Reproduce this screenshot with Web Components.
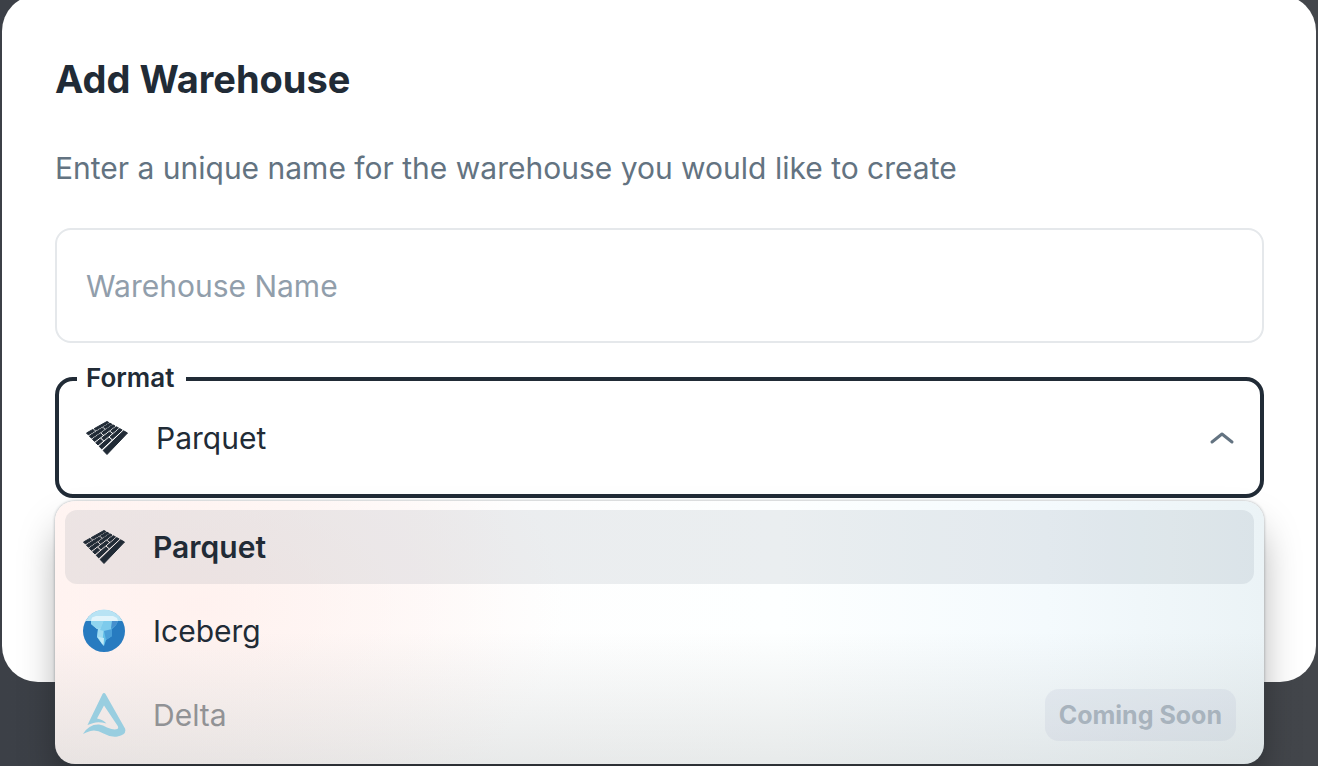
<!DOCTYPE html>
<html lang="en">
<head>
<meta charset="utf-8">
<meta name="viewport" content="width=device-width, initial-scale=1">
<title>Add Warehouse</title>
<style>
  :root {
    --ink: #212b36;
    --muted: #637381;
    --placeholder: #919eab;
    --line: #e5e8eb;
  }
  * { box-sizing: border-box; }
  body {
    margin: 0;
    min-height: 100vh;
    overflow: hidden;
    background: linear-gradient(90deg, #3c4047, #43464b);
    color: var(--ink);
    font-family: Inter, "Open Sans", sans-serif;
    font-size: 30px;
  }
</style>
</head>
<body>
<modal-dialog heading="Add Warehouse">
  <span slot="description">Enter a unique name for the warehouse you would like to create</span>
  <text-field placeholder="Warehouse Name"></text-field>
  <format-select label="Format" value="Parquet">
    <format-option icon="parquet" selected>Parquet</format-option>
    <format-option icon="iceberg">Iceberg</format-option>
    <format-option icon="delta" disabled note="Coming Soon">Delta</format-option>
  </format-select>
</modal-dialog>

<script>
// Each row of floor planks: start and end across the floor, then the joints along it
const plankRows = [
  [0, .09, [.34]],
  [.14, .24, [.66]],
  [.29, .39, [.42]],
  [.45, .56, [.26, .7]],
  [.62, .74, [.5]],
  [.81, 1, []],
];

function plankPath() {
  const point = (across, along) => {
    const x = 1.5 + 20.5 * across + along * 20.5;
    const y = 13 + 21.5 * across + along * (-11.5 - 10 * across);
    return `${x.toFixed(1)} ${y.toFixed(1)}`;
  };
  return plankRows.map(([from, to, joints]) => {
    const stops = [0, ...joints, 1];
    return stops.slice(1).map((end, i) => {
      const a = i === 0 ? 0 : stops[i] + .03;
      const b = end === 1 ? 1 : end - .03;
      return `M${point(from, a)}L${point(from, b)}L${point(to, b)}L${point(to, a)}z`;
    }).join('');
  }).join('');
}

const icons = {
  parquet: `
    <svg viewBox="0 0 44 36" width="44" height="36" fill="#212b36" stroke="#212b36" stroke-width="1" stroke-linejoin="round" aria-hidden="true">
      <path d="${plankPath()}"/>
    </svg>`,
  iceberg: `
    <svg viewBox="0 0 44 44" width="44" height="44" aria-hidden="true">
      <circle cx="22" cy="22" r="21" fill="#277bc0"/>
      <path d="M3.300 12a21 21 0 0 1 37.400 0z" fill="#b8e3f4"/>
      <path d="M10 8.500 14 7h17l4 2 1 3H9z" fill="#e2f4fb"/>
      <path d="M9 12h27l-2 4-4 4v7l-6 4-2 6-7-9 1-8-7-5z" fill="#62bfe7"/>
      <path d="m9 12 13 0-3 9-4-1-6-5z" fill="#90d5ef"/>
      <path d="m9 15 6 5 7-2-1 9-1 8-5-7 1-8z" fill="#a0dcf2"/>
      <path d="m22 12 8 0-1 9-7 1-4-1z" fill="#7dcbec"/>
      <path d="m30 12 6 0-2 4-5 4z" fill="#468fcd"/>
      <path d="m22 22 8-2v7l-6 4z" fill="#4a9fd8"/>
      <path d="m16 28 6 1-.5 8z" fill="#c0eaf7"/>
    </svg>`,
  delta: `
    <svg viewBox="0 0 44 44" width="44" height="44" fill="#99cee0" aria-hidden="true">
      <path d="M22 0q1 0 1.5 1L43 35.500q2 6.500-7.500 8-7 1-14-3-7-4-13-2.500Q5 39 1 41q6-10 16-9.500 4 .5 8 3 7 3 10.200 1.600 1.500-1 .7-2.900L22 12.500l-7 13q6 1 9.500 5-8-2-13-.5-3 1-6 2L20.500 1Q21 0 22 0z"/>
    </svg>`
};

class ModalDialog extends HTMLElement {
  constructor() {
    super();
    this.attachShadow({ mode: 'open' });
  }

  connectedCallback() {
    this.shadowRoot.innerHTML = `
      <style>
        :host { display: block; padding: 0 2px; }
        section {
          margin-top: -5px;
          padding: 54px 52px 184px 53px;
          border-radius: 36px;
          background: #fff;
        }
        h1 {
          margin: 0;
          font-size: 38px;
          line-height: 60px;
          font-weight: 700;
        }
        p {
          margin: 36px 0;
          color: var(--muted);
          line-height: 47px;
        }
        .fields {
          display: flex;
          flex-direction: column;
          gap: 34px;
        }
      </style>
      <section role="dialog" aria-labelledby="title">
        <h1 id="title">${this.getAttribute('heading')}</h1>
        <p><slot name="description"></slot></p>
        <div class="fields"><slot></slot></div>
      </section>
    `;
  }
}
customElements.define('modal-dialog', ModalDialog);

class TextField extends HTMLElement {
  constructor() {
    super();
    this.attachShadow({ mode: 'open' });
  }

  connectedCallback() {
    const placeholder = this.getAttribute('placeholder');
    this.shadowRoot.innerHTML = `
      <style>
        :host { display: block; }
        input {
          display: block;
          box-sizing: border-box;
          width: 100%;
          height: 115px;
          padding: 32px 29px;
          border: 2px solid var(--line);
          border-radius: 16px;
          background: #fff;
          color: inherit;
          font: inherit;
        }
        input::placeholder { color: var(--placeholder); opacity: 1; }
        input:focus { outline: none; border-color: var(--ink); }
      </style>
      <input type="text" placeholder="${placeholder}" aria-label="${placeholder}">
    `;
  }
}
customElements.define('text-field', TextField);

class FormatSelect extends HTMLElement {
  constructor() {
    super();
    this.attachShadow({ mode: 'open' });
  }

  connectedCallback() {
    const label = this.getAttribute('label');
    const value = this.getAttribute('value');
    this.shadowRoot.innerHTML = `
      <style>
        :host { display: block; position: relative; }
        .box {
          display: grid;
          align-items: center;
          height: 121px;
          box-sizing: border-box;
          border: 4px solid var(--ink);
          border-radius: 18px;
        }
        .box > * { grid-area: 1 / 1; }
        .icon { display: flex; padding-left: 26px; pointer-events: none; }
        .chevron { justify-self: end; margin-right: 25px; pointer-events: none; }
        select {
          width: 100%;
          height: 100%;
          padding: 0 80px 0 97px;
          appearance: none;
          border: none;
          outline: none;
          background: none;
          color: inherit;
          font: inherit;
        }
        label {
          position: absolute;
          top: -17px;
          left: 22px;
          padding: 0 12px 0 9px;
          background: #fff;
          font-size: 26px;
          line-height: 36px;
          font-weight: 600;
        }
        .menu {
          position: absolute;
          top: 100%;
          left: 0;
          right: 0;
          display: flex;
          flex-direction: column;
          gap: 10px;
          margin-top: 3px;
          padding: 9px 10px 12px;
          border-radius: 20px;
          background:
            linear-gradient(180deg, transparent 50%, rgba(185, 190, 190, .32)),
            radial-gradient(ellipse 30% 90% at 12% 40%, rgba(255, 240, 237, .8), transparent),
            linear-gradient(90deg, #fff6f4, #fefefe 38%, #fdffff 60%, #f4fafd 82%, #ebf3f6);
          box-shadow: 0 0 3px rgba(60, 70, 80, .45), 0 24px 40px -6px rgba(0, 0, 0, .38);
        }
      </style>
      <div class="box">
        <select id="format"><option>${value}</option></select>
        <span class="icon">${icons[value.toLowerCase()]}</span>
        <svg class="chevron" viewBox="0 0 26 16" width="26" height="16" fill="none" stroke="#637381" stroke-width="3" stroke-linecap="round" stroke-linejoin="round" aria-hidden="true"><path d="m3 12 10-8 10 8"/></svg>
      </div>
      <label for="format">${label}</label>
      <div class="menu" role="listbox" aria-label="${label}"><slot></slot></div>
    `;
  }
}
customElements.define('format-select', FormatSelect);

class FormatOption extends HTMLElement {
  constructor() {
    super();
    this.attachShadow({ mode: 'open' });
  }

  connectedCallback() {
    const note = this.getAttribute('note');
    const selected = this.hasAttribute('selected');
    this.shadowRoot.innerHTML = `
      <style>
        :host { display: block; }
        button {
          display: flex;
          align-items: center;
          width: 100%;
          height: 74px;
          padding: 0 18px 0 17px;
          border: none;
          border-radius: 12px;
          background: none;
          color: inherit;
          font: inherit;
          text-align: left;
        }
        button[aria-selected="true"] {
          background: rgba(99, 115, 129, .12);
          font-weight: 600;
        }
        button:disabled { color: #919295; }
        svg { flex: none; margin-right: 27px; }
        .note {
          margin-left: auto;
          padding: 0 14px;
          border-radius: 14px;
          background: rgba(145, 158, 191, .12);
          color: #a8b3bd;
          font-size: 25px;
          line-height: 52px;
          font-weight: 700;
        }
      </style>
      <button type="button" role="option" aria-selected="${selected}" ${this.hasAttribute('disabled') ? 'disabled' : ''}>
        ${icons[this.getAttribute('icon')]}
        <slot></slot>
        ${note ? `<span class="note">${note}</span>` : ''}
      </button>
    `;
  }
}
customElements.define('format-option', FormatOption);
</script>
</body>
</html>
